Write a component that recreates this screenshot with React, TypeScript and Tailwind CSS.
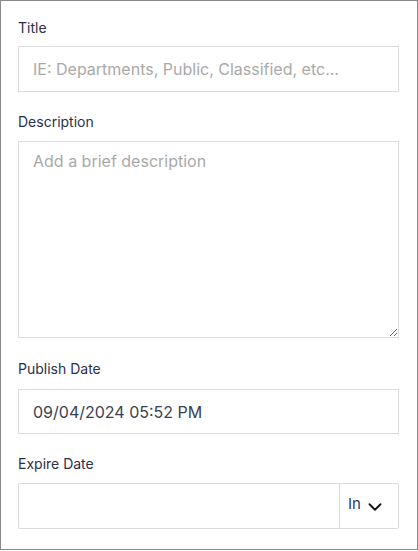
import { ChevronDown } from 'lucide-react';

const font = { fontFamily: 'Inter, "Noto Sans", sans-serif' };

const Label = ({ children }: { children: string }) => (
  <label className="block text-sm leading-5 text-[#2c3049]">{children}</label>
);

export default function App() {
  return (
    <div style={font} className="w-[418px] h-[550px] bg-white border border-[#8a8a8a] pt-[17px] pl-[17px] pr-[18px]">
      <div className="flex flex-col">
        {/* Title */}
        <Label>Title</Label>
        <input
          readOnly
          placeholder="IE: Departments, Public, Classified, etc..."
          className="mt-2 h-[46px] w-full border border-[#dcdcdc] px-[14px] text-base text-[#3a3f52] placeholder:text-[#a9a9a9] outline-none"
        />

        {/* Description */}
        <div className="mt-5">
          <Label>Description</Label>
        </div>
        <textarea
          readOnly
          placeholder="Add a brief description"
          className="mt-[9px] h-[197px] w-full border border-[#dcdcdc] px-[14px] py-[7px] text-base leading-6 text-[#3a3f52] placeholder:text-[#a9a9a9] outline-none"
        />

        {/* Publish Date */}
        <div className="mt-[21px]">
          <Label>Publish Date</Label>
        </div>
        <input
          readOnly
          value="09/04/2024 05:52 PM"
          className="mt-[10px] h-[45px] w-full border border-[#dcdcdc] px-[14px] text-base text-[#3a3f52] outline-none"
        />

        {/* Expire Date */}
        <div className="mt-5">
          <Label>Expire Date</Label>
        </div>
        <div className="mt-[9px] flex h-[46px] w-full border border-[#dcdcdc] rounded-[2px]">
          <input readOnly className="flex-1 min-w-0 px-[14px] text-base outline-none" />
          <div className="flex w-[59px] items-center gap-[3px] border-l border-[#dcdcdc] pl-[8px]">
            <span className="text-[15px] text-[#2b3a6b] -mt-[4px]">In</span>
            <ChevronDown size={22} strokeWidth={2} className="text-[#111] mt-[2px]" />
          </div>
        </div>
      </div>
    </div>
  );
}
